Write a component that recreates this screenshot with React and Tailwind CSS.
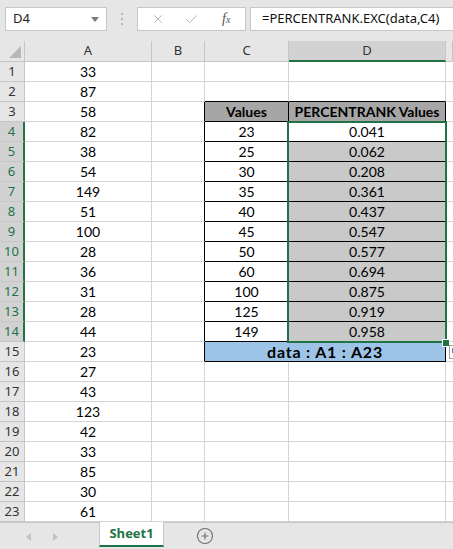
import { X, Check, CirclePlus } from 'lucide-react';

const colA = [33, 87, 58, 82, 38, 54, 149, 51, 100, 28, 36, 31, 28, 44, 23, 27, 43, 123, 42, 33, 85, 30, 61];
const tableVals = [23, 25, 30, 35, 40, 45, 50, 60, 100, 125, 149];
const ranks = ['0.041', '0.062', '0.208', '0.361', '0.437', '0.547', '0.577', '0.694', '0.875', '0.919', '0.958'];

function TopBar() {
  return (
    <div className="h-[41px] bg-[#e6e6e6] flex items-start pt-[7px] font-['Noto_Sans','Open_Sans',sans-serif] text-[13px]">
      {/* name box */}
      <div className="ml-[5px] w-[102px] h-[24px] bg-white border border-[#c6c6c6] flex items-center justify-between pl-[7px] pr-[7px] text-[#222]">
        <span>D4</span>
        <svg width="8" height="5" viewBox="0 0 8 5">
          <polygon points="0,0 8,0 4,5" fill="#7a7a7a" />
        </svg>
      </div>
      {/* divider dots */}
      <div className="ml-[13px] w-[4px] h-[24px] flex flex-col items-center justify-center gap-[3px]">
        <span className="w-[2px] h-[2px] bg-[#b5b5b5]" />
        <span className="w-[2px] h-[2px] bg-[#b5b5b5]" />
        <span className="w-[2px] h-[2px] bg-[#b5b5b5]" />
      </div>
      {/* cancel / enter / fx */}
      <div className="ml-[13px] w-[109px] h-[24px] bg-white border border-[#c6c6c6] flex items-center">
        <X size={14} strokeWidth={1.4} className="ml-[13px] text-[#a8a8a8]" />
        <Check size={15} strokeWidth={1.4} className="ml-[19px] text-[#a8a8a8]" />
        <span className="ml-[23px] font-['Liberation_Serif',serif] italic text-[14px] text-[#555] leading-none">
          f<span className="text-[10px]">x</span>
        </span>
      </div>
      {/* formula */}
      <div className="ml-[4px] flex-1 h-[24px] bg-white border-y border-l border-[#c6c6c6] flex items-center pl-[11px] text-[13px] text-[#111]">
        =PERCENTRANK.EXC(data,C4)
      </div>
    </div>
  );
}

function HeaderRow() {
  const hd = 'h-full flex items-center justify-center border-r border-b border-[#c6c6c6] bg-[#e6e6e6] text-[#333]';
  return (
    <div className="h-[21px] flex font-['Noto_Sans','Open_Sans',sans-serif] text-[13px]">
      <div className="w-[25px] h-full border-r border-b border-[#c6c6c6] bg-[#e6e6e6] flex items-end justify-end pr-[3px] pb-[3px]">
        <svg width="12" height="12" viewBox="0 0 12 12">
          <polygon points="12,0 12,12 0,12" fill="#b7b7b7" />
        </svg>
      </div>
      <div className={`w-[127px] ${hd}`}>A</div>
      <div className={`w-[53px] ${hd}`}>B</div>
      <div className={`w-[84px] ${hd}`}>C</div>
      <div className="w-[157px] h-full flex items-center justify-center border-r border-r-[#c6c6c6] border-b-2 border-b-[#217346] bg-[#d2d2d2] text-[#333]">
        D
      </div>
      <div className={`flex-1 ${hd}`} />
    </div>
  );
}

function Row({ r }) {
  const sel = r >= 4 && r <= 14;
  const inTable = r >= 3 && r <= 15;
  const grid = 'border-[#d4d4d4]';

  const rowHead = sel
    ? 'bg-[#d2d2d2] text-[#217346] border-r-2 border-r-[#217346] border-b border-b-[#c6c6c6]'
    : 'bg-[#e6e6e6] text-[#333] border-r border-b border-[#c6c6c6]';

  const bRight = inTable ? 'border-r-black' : 'border-r-[#d4d4d4]';
  const tableBottom = r >= 2 && r <= 15 ? 'border-b-black' : 'border-b-[#d4d4d4]';
  const tableRight = inTable ? 'border-r-black' : 'border-r-[#d4d4d4]';

  let cText = '';
  let dText = '';
  let cBg = '';
  let dBg = '';
  let bold = '';
  if (r === 3) {
    cText = 'Values';
    dText = 'PERCENTRANK Values';
    cBg = 'bg-[#a6a6a6]';
    dBg = 'bg-[#a6a6a6]';
    bold = 'font-bold';
  } else if (sel) {
    cText = tableVals[r - 4];
    dText = ranks[r - 4];
    dBg = r === 4 ? 'bg-white' : 'bg-[#c9c9c9]';
  }

  return (
    <div className="h-[20px] flex">
      <div className={`w-[25px] h-full flex items-center justify-center font-['Noto_Sans','Open_Sans',sans-serif] text-[13px] ${rowHead}`}>
        {r}
      </div>
      <div className={`w-[127px] h-full flex items-center justify-center border-r border-b ${grid}`}>{colA[r - 1]}</div>
      <div className={`w-[53px] h-full border-r border-b border-b-[#d4d4d4] ${bRight}`} />
      {r === 15 ? (
        <div className="w-[241px] h-full flex items-center justify-center border-r border-b border-black bg-[#9dc3e6] font-bold text-[16px] tracking-[0.8px]">
          data : A1 : A23
        </div>
      ) : (
        <>
          <div className={`w-[84px] h-full flex items-center justify-center border-r border-b ${tableRight} ${tableBottom} ${cBg} ${bold}`}>
            {cText}
          </div>
          <div className={`w-[157px] h-full flex items-center justify-center border-r border-b ${tableRight} ${tableBottom} ${dBg} ${bold}`}>
            {dText}
          </div>
        </>
      )}
      <div className={`flex-1 h-full border-b ${grid}`} />
    </div>
  );
}

function TabBar() {
  return (
    <div className="h-[27px] bg-[#e6e6e6] border-t border-[#c6c6c6] flex items-start font-['Open_Sans','Noto_Sans',sans-serif]">
      <div className="ml-[26px] mt-[10px] flex items-center gap-[22px]">
        <svg width="5" height="8" viewBox="0 0 5 8">
          <polygon points="5,0 5,8 0,4" fill="#c2c2c2" />
        </svg>
        <svg width="5" height="8" viewBox="0 0 5 8">
          <polygon points="0,0 0,8 5,4" fill="#c2c2c2" />
        </svg>
      </div>
      <div className="ml-[41px] -mt-px w-[65px] h-[25px] bg-white border-x border-[#c6c6c6] border-b-2 border-b-[#217346] flex items-center justify-center text-[13px] font-bold text-[#217346]">
        Sheet1
      </div>
      <CirclePlus size={18} strokeWidth={1.5} className="ml-[32px] mt-[4px] text-[#6f6f6f]" />
    </div>
  );
}

export default function App() {
  const rows = Array.from({ length: 23 }, (_, i) => i + 1);
  return (
    <div className="w-[453px] h-[549px] overflow-hidden bg-white flex flex-col">
      <TopBar />
      <div className="relative flex-1 overflow-hidden font-['Lato','Liberation_Sans',sans-serif] text-[14px] text-black">
        <HeaderRow />
        {rows.map((r) => (
          <Row key={r} r={r} />
        ))}
        {/* selection D4:D14 */}
        <div className="absolute left-[287px] top-[80px] w-[160px] h-[222px] border-2 border-[#217346] pointer-events-none" />
        <div className="absolute left-[442px] top-[298px] w-[8px] h-[8px] bg-[#217346] border border-white" />
        {/* quick analysis button */}
        <div className="absolute left-[449px] top-[304px] w-[14px] h-[14px] bg-white border border-[#a0a0a0] p-[2px]">
          <div className="w-[5px] h-[5px] bg-[#4a90d9]" />
        </div>
      </div>
      <TabBar />
    </div>
  );
}
